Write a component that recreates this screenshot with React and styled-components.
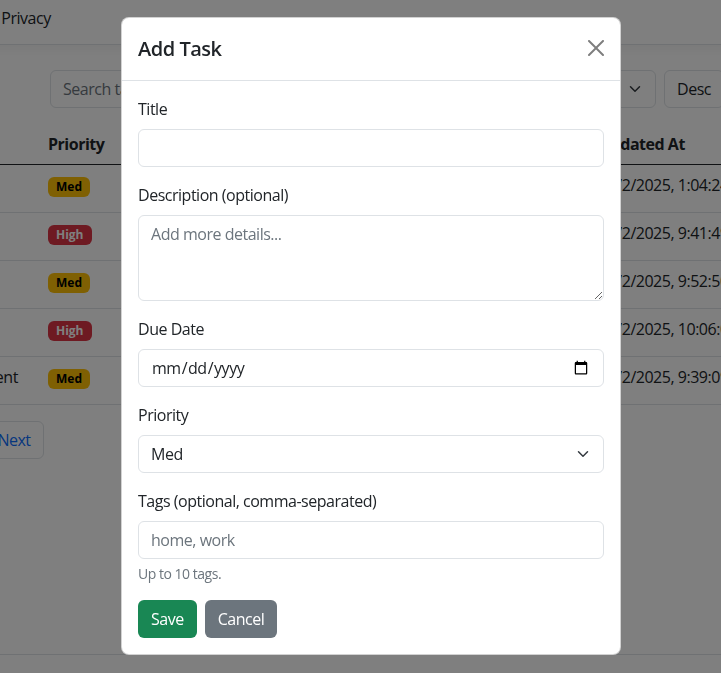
import React from "react";
import styled, { createGlobalStyle } from "styled-components";

const GlobalStyle = createGlobalStyle`
  *, *::before, *::after { box-sizing: border-box; }
  html, body { margin: 0; padding: 0; }
  body {
    font-family: "Open Sans", "Noto Sans", sans-serif;
    font-size: 16px;
    line-height: 1.5;
    letter-spacing: -0.03em;
    color: #212529;
    background: #fff;
    overflow: hidden;
  }
`;

const tasks = [
    { title: "Gym", priority: "Med", updated: "12/2/2025, 1:04:24 PM" },
    { title: "Run", priority: "High", updated: "12/2/2025, 9:41:49 AM" },
    { title: "Mop", priority: "Med", updated: "12/2/2025, 9:52:50 AM" },
    { title: "Bake", priority: "High", updated: "12/2/2025, 10:06:01 AM" },
    { title: "Pay rent", priority: "Med", updated: "12/2/2025, 9:39:09 AM" },
];

const ChevronIcon = ({ className }) => (
    <svg className={className} width="16" height="12" viewBox="0 0 16 16">
        <path
            fill="none"
            stroke="#343a40"
            strokeLinecap="round"
            strokeLinejoin="round"
            strokeWidth="2"
            d="m2 5 6 6 6-6"
        />
    </svg>
);

const App = () => {
    return (
        <>
            <GlobalStyle />
            <Page>
                <Navbar>
                    <NavLink href="#">Home</NavLink>
                    <NavLink href="#">Privacy</NavLink>
                </Navbar>
                <Main>
                    <Toolbar>
                        <SearchInput placeholder="Search tasks..." />
                        <SelectWrap $width="160px">
                            <Select defaultValue="updated">
                                <option value="updated">Updated At</option>
                            </Select>
                            <Chevron />
                        </SelectWrap>
                        <OutlineButton type="button">Desc</OutlineButton>
                    </Toolbar>
                    <Table>
                        <colgroup>
                            <col style={{ width: 88 }} />
                            <col style={{ width: 100 }} />
                            <col style={{ width: 140 }} />
                            <col style={{ width: 160 }} />
                            <col style={{ width: 151 }} />
                            <col style={{ width: 210 }} />
                            <col style={{ width: 140 }} />
                        </colgroup>
                        <thead>
                            <tr>
                                <Th>Title</Th>
                                <Th>Priority</Th>
                                <Th>Due</Th>
                                <Th>Tags</Th>
                                <Th>Status</Th>
                                <Th>Updated At</Th>
                                <Th>Actions</Th>
                            </tr>
                        </thead>
                        <tbody>
                            {tasks.map((t) => (
                                <tr key={t.title}>
                                    <Td>{t.title}</Td>
                                    <Td>
                                        <Badge $level={t.priority}>{t.priority}</Badge>
                                    </Td>
                                    <Td></Td>
                                    <Td></Td>
                                    <Td>Open</Td>
                                    <Td>{t.updated}</Td>
                                    <Td>
                                        <SmallButton>Edit</SmallButton>
                                    </Td>
                                </tr>
                            ))}
                        </tbody>
                    </Table>
                    <Pager>
                        <PageLink>Previous</PageLink>
                        <PageLink>Next</PageLink>
                    </Pager>
                </Main>
                <Footer />
            </Page>

            <Backdrop>
                <ModalContent>
                    <ModalHeader>
                        <ModalTitle>Add Task</ModalTitle>
                        <CloseButton type="button" aria-label="Close">
                            <svg width="16" height="16" viewBox="0 0 16 16">
                                <path
                                    fill="#000"
                                    d="M.293.293a1 1 0 0 1 1.414 0L8 6.586 14.293.293a1 1 0 1 1 1.414 1.414L9.414 8l6.293 6.293a1 1 0 0 1-1.414 1.414L8 9.414l-6.293 6.293a1 1 0 0 1-1.414-1.414L6.586 8 .293 1.707a1 1 0 0 1 0-1.414z"
                                />
                            </svg>
                        </CloseButton>
                    </ModalHeader>
                    <ModalBody onSubmit={(e) => e.preventDefault()}>
                        <Field>
                            <Label>Title</Label>
                            <Input type="text" />
                        </Field>
                        <Field>
                            <Label>Description (optional)</Label>
                            <TextArea rows={3} placeholder="Add more details..." />
                        </Field>
                        <Field>
                            <Label>Due Date</Label>
                            <Input type="date" />
                        </Field>
                        <Field>
                            <Label>Priority</Label>
                            <SelectWrap>
                                <Select defaultValue="Med">
                                    <option>Low</option>
                                    <option>Med</option>
                                    <option>High</option>
                                </Select>
                                <Chevron />
                            </SelectWrap>
                        </Field>
                        <Field>
                            <Label>Tags (optional, comma-separated)</Label>
                            <Input type="text" placeholder="home, work" />
                            <Hint>Up to 10 tags.</Hint>
                        </Field>
                        <Actions>
                            <Button type="submit" $variant="success">Save</Button>
                            <Button type="button" $variant="secondary">Cancel</Button>
                        </Actions>
                    </ModalBody>
                </ModalContent>
            </Backdrop>
        </>
    );
};

const Page = styled.div`
    width: 1200px;
    height: 673px;
    margin-left: -200px;
    display: flex;
    flex-direction: column;
`;

const Navbar = styled.nav`
    height: 45px;
    display: flex;
    padding: 6px 0 0 134px;
    border-bottom: 1px solid #dee2e6;
    box-shadow: 0 4px 12px rgba(0, 0, 0, 0.05);
`;

const NavLink = styled.a`
    padding: 0 8px;
    color: #212529;
    text-decoration: none;
`;

const Main = styled.main`
    flex: 1;
    padding-top: 25px;
`;

const Toolbar = styled.div`
    display: flex;
    gap: 8px;
    width: 674px;
    margin-left: 250px;
`;

const fieldBase = `
    height: 38px;
    padding: 6px 12px;
    font: inherit;
    letter-spacing: inherit;
    color: #212529;
    background-color: #fff;
    border: 1px solid #dee2e6;
    border-radius: 6px;
`;

const SearchInput = styled.input`
    ${fieldBase}
    flex: 1;
    &::placeholder {
        color: #6c757d;
        opacity: 1;
    }
`;

const OutlineButton = styled.button`
    ${fieldBase}
    width: 60px;
    text-align: center;
`;

const Table = styled.table`
    margin: 16px 0 0 152px;
    border-collapse: collapse;
`;

const Th = styled.th`
    padding: 8px;
    text-align: left;
    font-weight: 700;
    white-space: nowrap;
    border-bottom: 1px solid #212529;
`;

const Td = styled.td`
    padding: 8px;
    vertical-align: top;
    white-space: nowrap;
    border-bottom: 1px solid #dee2e6;
`;

const Badge = styled.span`
    display: inline-block;
    padding: 4px 8px;
    font-size: 12px;
    font-weight: 700;
    line-height: 1;
    letter-spacing: 0;
    border-radius: 6px;
    color: ${(p) => (p.$level === "High" ? "#fff" : "#000")};
    background: ${(p) => (p.$level === "High" ? "#dc3545" : "#ffc107")};
`;

const SmallButton = styled.button`
    height: 31px;
    padding: 4px 8px;
    font: inherit;
    font-size: 14px;
    border: 1px solid #0d6efd;
    border-radius: 4px;
    color: #0d6efd;
    background: #fff;
`;

const Pager = styled.div`
    display: flex;
    margin: 16px 0 0 99px;
`;

const PageLink = styled.a`
    padding: 6px 12px;
    color: #0d6efd;
    background: #fff;
    border: 1px solid #dee2e6;
    text-decoration: none;

    &:first-child {
        border-radius: 6px 0 0 6px;
    }
    &:last-child {
        margin-left: -1px;
        border-radius: 0 6px 6px 0;
    }
`;

const Footer = styled.footer`
    height: 19px;
    border-top: 1px solid #dee2e6;
`;

const Backdrop = styled.div`
    position: fixed;
    inset: 0;
    padding: 17px 0 0 121px;
    background: rgba(0, 0, 0, 0.5);
`;

const ModalContent = styled.div`
    width: 500px;
    display: flex;
    flex-direction: column;
    background: #fff;
    border: 1px solid rgba(0, 0, 0, 0.175);
    border-radius: 8px;
`;

const ModalHeader = styled.div`
    display: flex;
    align-items: center;
    justify-content: space-between;
    padding: 16px;
    border-bottom: 1px solid #dee2e6;
`;

const ModalTitle = styled.h5`
    margin: 0;
    font-size: 20px;
    font-weight: 600;
    line-height: 1.5;
`;

const CloseButton = styled.button`
    display: flex;
    width: 16px;
    height: 16px;
    margin-top: -2px;
    padding: 0;
    border: 0;
    background: transparent;
    opacity: 0.5;
`;

const ModalBody = styled.form`
    padding: 16px;
`;

const Field = styled.div`
    margin-bottom: 16px;
`;

const Label = styled.label`
    display: block;
    margin-bottom: 8px;
`;

const Input = styled.input`
    ${fieldBase}
    display: block;
    width: 100%;
    &::placeholder {
        color: #6c757d;
        opacity: 1;
    }
`;

const TextArea = styled.textarea`
    ${fieldBase}
    display: block;
    width: 100%;
    height: 86px;
    resize: vertical;
    &::placeholder {
        color: #6c757d;
        opacity: 1;
    }
`;

const SelectWrap = styled.div`
    position: relative;
    width: ${(p) => p.$width || "100%"};
`;

const Select = styled.select`
    ${fieldBase}
    display: block;
    width: 100%;
    appearance: none;
`;

const Chevron = styled(ChevronIcon)`
    position: absolute;
    right: 13px;
    top: 13px;
    pointer-events: none;
`;

const Hint = styled.div`
    margin-top: 4px;
    font-size: 14px;
    color: #6c757d;
`;

const Actions = styled.div`
    display: flex;
    gap: 8px;
`;

const Button = styled.button`
    height: 38px;
    padding: 6px 12px;
    font: inherit;
    letter-spacing: inherit;
    color: #fff;
    border: 1px solid transparent;
    border-radius: 6px;
    background: ${(p) => (p.$variant === "success" ? "#198754" : "#6c757d")};
`;

export default App;
